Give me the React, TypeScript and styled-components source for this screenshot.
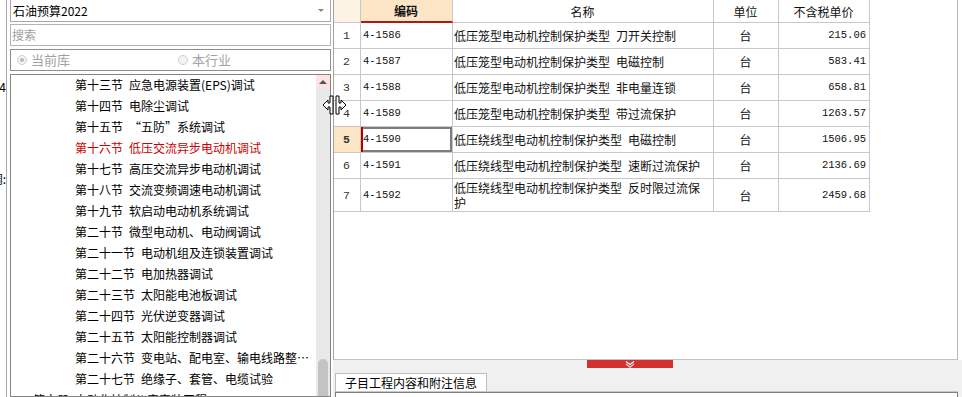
import React from 'react';
import styled, { createGlobalStyle } from 'styled-components';

const CJK = `"Noto Sans CJK SC", "Liberation Sans", sans-serif`;
const MONO = `"Liberation Mono", "Noto Sans CJK SC", monospace`;

const GlobalStyle = createGlobalStyle`
  html, body { margin: 0; padding: 0; background: #fff; }
  body { font-family: ${CJK}; font-size: 12px; color: #000; }
`;

interface IRow {
  no: number;
  code: string;
  name: string;
  unit: string;
  price: string;
}

// the old grid font uses a half-width (6px) space, so use an en space
const sp = (s: string) => s.replace(/ /g, '\u2002');

const treeItems = [
  '第十三节 应急电源装置(EPS)调试',
  '第十四节 电除尘调试',
  '第十五节 “五防”系统调试',
  '第十六节 低压交流异步电动机调试',
  '第十七节 高压交流异步电动机调试',
  '第十八节 交流变频调速电动机调试',
  '第十九节 软启动电动机系统调试',
  '第二十节 微型电动机、电动阀调试',
  '第二十一节 电动机组及连锁装置调试',
  '第二十二节 电加热器调试',
  '第二十三节 太阳能电池板调试',
  '第二十四节 光伏逆变器调试',
  '第二十五节 太阳能控制器调试',
  '第二十六节 变电站、配电室、输电线路整…',
  '第二十七节 绝缘子、套管、电缆试验',
];

const rows: IRow[] = [
  { no: 1, code: '4-1586', name: '低压笼型电动机控制保护类型 刀开关控制', unit: '台', price: '215.06' },
  { no: 2, code: '4-1587', name: '低压笼型电动机控制保护类型 电磁控制', unit: '台', price: '583.41' },
  { no: 3, code: '4-1588', name: '低压笼型电动机控制保护类型 非电量连锁', unit: '台', price: '658.81' },
  { no: 4, code: '4-1589', name: '低压笼型电动机控制保护类型 带过流保护', unit: '台', price: '1263.57' },
  { no: 5, code: '4-1590', name: '低压绕线型电动机控制保护类型 电磁控制', unit: '台', price: '1506.95' },
  { no: 6, code: '4-1591', name: '低压绕线型电动机控制保护类型 速断过流保护', unit: '台', price: '2136.69' },
  { no: 7, code: '4-1592', name: '低压绕线型电动机控制保护类型 反时限过流保护', unit: '台', price: '2459.68' },
];

const Screen = styled.div`
  position: relative;
  display: flex;
  width: 962px;
  height: 397px;
  overflow: hidden;
  background: #fff;
`;

/* sliver of the collapsed panel on the far left */
const EdgeStrip = styled.div`
  flex: none;
  width: 6px;
  border-right: 1px solid #a9a9a9;
  overflow: hidden;
  display: flex;
  flex-direction: column;
  align-items: flex-end;
  padding-top: 80px;
  gap: 78px;
`;

const EdgeLine = styled.div`
  white-space: nowrap;
  font-size: 12px;
  line-height: 14px;
`;

const LeftPanel = styled.div`
  flex: none;
  width: 326px;
  box-sizing: border-box;
  padding: 0 2px 0 3px;
  display: flex;
  flex-direction: column;
`;

const Combo = styled.div`
  box-sizing: border-box;
  height: 22px;
  border: 1px solid #a7a7a7;
  border-top: none;
  display: flex;
  align-items: center;
  justify-content: space-between;
  padding: 0 6px 0 2px;
  font-size: 12px;
`;

const ComboArrow = styled.span`
  width: 0;
  height: 0;
  border-left: 3px solid transparent;
  border-right: 3px solid transparent;
  border-top: 3px solid #888;
`;

const SearchBox = styled.div`
  box-sizing: border-box;
  height: 22px;
  margin-top: 2px;
  border: 1px solid #b4b4b4;
  display: flex;
  align-items: center;
  padding-left: 1px;
  color: #a0a0a0;
  font-size: 12px;
`;

const RadioBox = styled.div`
  box-sizing: border-box;
  height: 22px;
  margin-top: 3px;
  border: 1px solid #8e8e8e;
  display: grid;
  grid-template-columns: 161px 1fr;
  align-items: center;
  padding-left: 6px;
`;

const RadioOption = styled.label`
  display: flex;
  align-items: center;
  gap: 4px;
  color: #a2a2a2;
  font-size: 13px;
`;

const RadioDot = styled.span<{ $checked?: boolean }>`
  box-sizing: border-box;
  width: 10px;
  height: 10px;
  border-radius: 50%;
  border: 1px solid #cfcfcf;
  background: #f4f4f4;
  display: flex;
  align-items: center;
  justify-content: center;
  &::after {
    content: '';
    width: 4px;
    height: 4px;
    border-radius: 50%;
    background: ${p => (p.$checked ? '#b8b8b8' : 'transparent')};
  }
`;

const TreeBox = styled.div`
  box-sizing: border-box;
  height: 325px;
  margin-top: 3px;
  border: 1px solid #848484;
  display: flex;
  overflow: hidden;
`;

const TreeList = styled.div`
  flex: 1;
  overflow: hidden;
`;

const TreeItem = styled.div<{ $active?: boolean; $indent?: number }>`
  height: 21px;
  line-height: 20px;
  padding-left: ${p => p.$indent ?? 64}px;
  white-space: nowrap;
  font-size: 12px;
  color: ${p => (p.$active ? '#cc0000' : '#000')};
`;

const ScrollBar = styled.div`
  flex: none;
  width: 14px;
  background: #e9e9e9;
  display: flex;
  flex-direction: column;
  justify-content: space-between;
`;

const ScrollUp = styled.div`
  height: 14px;
  background: #fde3e3;
  display: flex;
  align-items: center;
  justify-content: center;
  &::after {
    content: '';
    border-left: 4px solid transparent;
    border-right: 4px solid transparent;
    border-bottom: 4px solid #555;
  }
`;

const ScrollThumb = styled.div`
  height: 37px;
  margin: 0 2px;
  border-radius: 5px 5px 0 0;
  background: #c3c3c3;
`;

const RightPanel = styled.div`
  flex: 1;
  display: flex;
  flex-direction: column;
`;

const GridArea = styled.div`
  box-sizing: border-box;
  height: 360px;
  margin-right: 4px;
  background: #fff;
  border-left: 1px solid #a3a3a3;
  border-right: 1px solid #b8b8b8;
  border-bottom: 1px solid #c4c4c4;
`;

const DataGrid = styled.div`
  display: grid;
  grid-template-columns: 27px 92px 261px 65px 91px;
  grid-template-rows: 23px repeat(6, 26px) 33px;
  width: 536px;
`;

const Cell = styled.div<{
  $align?: 'left' | 'center' | 'right';
  $bg?: string;
  $bold?: boolean;
  $mono?: boolean;
  $selected?: boolean;
  $underline?: boolean;
}>`
  box-sizing: border-box;
  border-right: 1px solid #c8c8c8;
  border-bottom: 1px solid ${p => (p.$underline ? '#b01818' : '#c8c8c8')};
  ${p => (p.$underline ? 'border-bottom-width: 2px;' : '')}
  background: ${p => p.$bg ?? '#fff'};
  display: flex;
  align-items: center;
  justify-content: ${p =>
    p.$align === 'center' ? 'center' : p.$align === 'right' ? 'flex-end' : 'flex-start'};
  padding: 0 3px 0 2px;
  font-family: ${p => (p.$mono ? MONO : CJK)};
  font-size: ${p => (p.$mono ? '10.5px' : '12px')};
  font-weight: ${p => (p.$bold ? 700 : 400)};
  color: #111;
  line-height: 15px;
  ${p => (p.$selected ? 'box-shadow: inset 2px 0 0 #b00000, inset 0 0 0 2px #7d7d7d;' : '')}
`;

const RowNo = styled(Cell)`
  font-family: ${MONO};
  font-size: 11.5px;
  color: #333;
`;

const NameCell = styled(Cell)`
  padding: 0 2px 0 1px;
  line-height: 15px;
`;

const BottomStrip = styled.div`
  flex: 1;
  background: #f0f0f0;
  display: flex;
  flex-direction: column;
`;

const SplitHandle = styled.div`
  margin-left: 254px;
  width: 86px;
  height: 8px;
  background: #d33030;
  display: flex;
  align-items: center;
  justify-content: center;
`;

const TabBar = styled.div`
  margin-top: 5px;
  padding-left: 2px;
  display: flex;
`;

const Tab = styled.div`
  box-sizing: border-box;
  height: 18px;
  padding: 0 9px;
  background: #fff;
  border: 1px solid #bdbdbd;
  border-bottom: none;
  font-size: 12px;
  line-height: 17px;
`;

const TabPanel = styled.div`
  flex: 1;
  margin: 0 4px 0 2px;
  border-top: 1px solid #c8c8c8;
  background: #fff;
  box-shadow: inset 1px 1px 0 #7f7f7f, inset -1px 0 0 #7f7f7f;
`;

const ResizeCursor = styled.svg`
  position: absolute;
  left: 322px;
  top: 95px;
`;

export default function App() {
  return (
    <>
      <GlobalStyle />
      <Screen>
        <EdgeStrip>
          <EdgeLine>计24</EdgeLine>
          <EdgeLine>调:</EdgeLine>
        </EdgeStrip>

        <LeftPanel>
          <Combo>
            <span>石油预算2022</span>
            <ComboArrow />
          </Combo>
          <SearchBox>搜索</SearchBox>
          <RadioBox>
            <RadioOption>
              <RadioDot $checked />
              当前库
            </RadioOption>
            <RadioOption>
              <RadioDot />
              本行业
            </RadioOption>
          </RadioBox>
          <TreeBox>
            <TreeList>
              {treeItems.map((t, i) => (
                <TreeItem key={t} $active={i === 3}>
                  {sp(t)}
                </TreeItem>
              ))}
              <TreeItem $indent={22}>{sp('第六册 自动化控制仪表安装工程')}</TreeItem>
            </TreeList>
            <ScrollBar>
              <ScrollUp />
              <ScrollThumb />
            </ScrollBar>
          </TreeBox>
        </LeftPanel>

        <RightPanel>
          <GridArea>
            <DataGrid>
              <Cell $bg="#fdf3e4" />
              <Cell $align="center" $bg="#fde6c6" $bold $underline>
                编码
              </Cell>
              <Cell $align="center">名称</Cell>
              <Cell $align="center">单位</Cell>
              <Cell $align="center">不含税单价</Cell>
              {rows.map(r => {
                const sel = r.no === 5;
                return (
                  <React.Fragment key={r.code}>
                    <RowNo $align="center" $bg={sel ? '#fde6c6' : undefined} $bold={sel}>
                      {r.no}
                    </RowNo>
                    <Cell $mono $selected={sel}>
                      {r.code}
                    </Cell>
                    <NameCell>{sp(r.name)}</NameCell>
                    <Cell $align="center">{r.unit}</Cell>
                    <Cell $mono $align="right">
                      {r.price}
                    </Cell>
                  </React.Fragment>
                );
              })}
            </DataGrid>
          </GridArea>
          <BottomStrip>
            <SplitHandle>
              <svg width="10" height="7" viewBox="0 0 10 7">
                <polyline points="1,0.5 5,3.5 9,0.5" fill="none" stroke="#fff" strokeWidth="1.3" />
                <polyline points="1,3 5,6.2 9,3" fill="none" stroke="#f7c9c9" strokeWidth="1.3" />
              </svg>
            </SplitHandle>
            <TabBar>
              <Tab>子目工程内容和附注信息</Tab>
            </TabBar>
            <TabPanel />
          </BottomStrip>
        </RightPanel>

        <ResizeCursor width="25" height="20" viewBox="0 0 25 20">
          <path
            d="M1 10 L6 5 L6 8 L8 8 L8 1 L11 1 L11 19 L8 19 L8 12 L6 12 L6 15 Z"
            fill="#fff"
            stroke="#000"
            strokeWidth="1"
          />
          <path
            d="M24 10 L19 5 L19 8 L17 8 L17 1 L14 1 L14 19 L17 19 L17 12 L19 12 L19 15 Z"
            fill="#fff"
            stroke="#000"
            strokeWidth="1"
          />
        </ResizeCursor>
      </Screen>
    </>
  );
}
